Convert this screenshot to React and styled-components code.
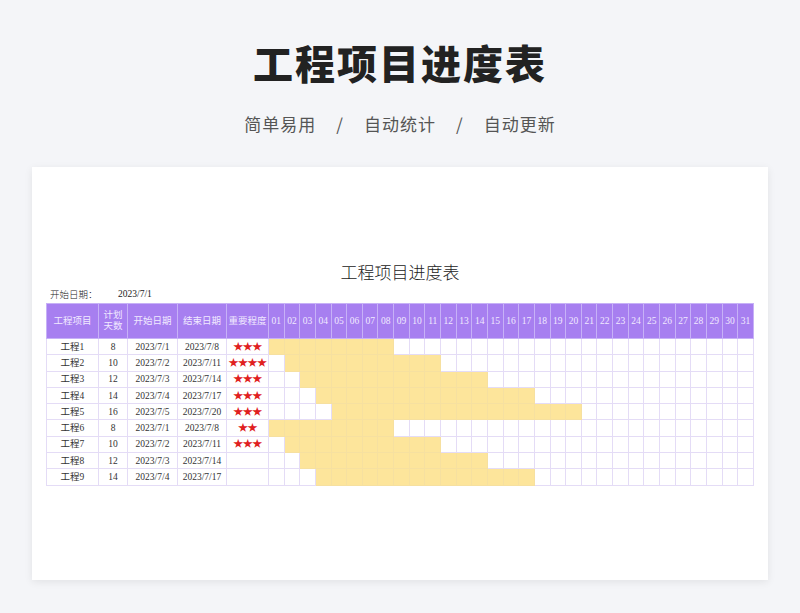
import { createGlobalStyle } from "styled-components";
import styled from "styled-components";

const Global = createGlobalStyle`
  body { margin: 0; background: #f4f5f8; font-family: "Noto Sans CJK SC", "Noto Sans", sans-serif; }
`;

const Page = styled.div`
  width: 800px;
  height: 613px;
  display: flex;
  flex-direction: column;
  align-items: center;
`;

const Heading = styled.h1`
  margin: 36px 0 0;
  height: 52px;
  font-size: 40px;
  font-weight: 900;
  color: #222;
  letter-spacing: 2px;
  line-height: 52px;
`;

const Sub = styled.div`
  margin-top: 24px;
  display: flex;
  gap: 20px;
  font-size: 17px;
  color: #555;
  line-height: 24px;
  letter-spacing: 1px;
`;

const Card = styled.div`
  margin-top: 31px;
  width: 736px;
  height: 413px;
  background: #fff;
  box-shadow: 0 2px 8px rgba(0, 0, 0, 0.08);
  box-sizing: border-box;
  padding: 93px 14px 0;
  font-family: "Liberation Serif", "Noto Sans CJK SC", serif;
`;

const Title = styled.div`
  text-align: center;
  font-size: 17px;
  color: #222;
  line-height: 24px;
  font-family: "Noto Sans CJK SC", serif;
  font-weight: 300;
`;

const StartRow = styled.div`
  display: flex;
  font-size: 9.5px;
  color: #222;
  height: 19px;
  align-items: center;
  padding-left: 4px;
  span:first-child { width: 68px; font-family: "Noto Sans CJK SC", serif; font-weight: 300; }
`;

const Table = styled.table`
  border-collapse: collapse;
  width: 708px;
  table-layout: fixed;
  font-size: 9.5px;
  color: #333;
`;

const Th = styled.th`
  background: #a77ff0;
  color: #f1eaff;
  font-weight: normal;
  border: 1px solid #c7b1f7;
  height: 34px;
  padding: 0;
  line-height: 11px;
  text-align: center;
`;

const Td = styled.td`
  border: 1px solid #e4dcf6;
  height: 15.3px;
  line-height: 12px;
  padding: 0;
  text-align: center;
  background: ${(p) => (p.$on ? "#fde59b" : "#fff")};
  border-color: ${(p) => (p.$on ? "#f6e0a0" : "#e4dcf6")};
`;

const Stars = styled.span`
  color: #e0201e;
  font-size: 10px;
  letter-spacing: -0.5px;
`;

const rows = [
  ["工程1", 8, 1, 3],
  ["工程2", 10, 2, 4],
  ["工程3", 12, 3, 3],
  ["工程4", 14, 4, 3],
  ["工程5", 16, 5, 3],
  ["工程6", 8, 1, 2],
  ["工程7", 10, 2, 3],
  ["工程8", 12, 3, 0],
  ["工程9", 14, 4, 0],
];

const days = Array.from({ length: 31 }, (_, i) => i + 1);

export default function App() {
  return (
    <Page>
      <Global />
      <Heading>工程项目进度表</Heading>
      <Sub>
        <span>简单易用</span>
        <span>/</span>
        <span>自动统计</span>
        <span>/</span>
        <span>自动更新</span>
      </Sub>
      <Card>
        <Title>工程项目进度表</Title>
        <StartRow>
          <span>开始日期：</span>
          <span>2023/7/1</span>
        </StartRow>
        <Table>
          <colgroup>
            <col style={{ width: 52 }} />
            <col style={{ width: 29 }} />
            <col style={{ width: 50 }} />
            <col style={{ width: 49 }} />
            <col style={{ width: 42 }} />
            {days.map((d) => (
              <col key={d} />
            ))}
          </colgroup>
          <thead>
            <tr>
              <Th>工程项目</Th>
              <Th>计划<br />天数</Th>
              <Th>开始日期</Th>
              <Th>结束日期</Th>
              <Th>重要程度</Th>
              {days.map((d) => (
                <Th key={d}>{String(d).padStart(2, "0")}</Th>
              ))}
            </tr>
          </thead>
          <tbody>
            {rows.map(([name, len, start, stars]) => (
              <tr key={name}>
                <Td>{name}</Td>
                <Td>{len}</Td>
                <Td>2023/7/{start}</Td>
                <Td>2023/7/{start + len - 1}</Td>
                <Td><Stars>{"★".repeat(stars)}</Stars></Td>
                {days.map((d) => (
                  <Td key={d} $on={d >= start && d < start + len} />
                ))}
              </tr>
            ))}
          </tbody>
        </Table>
      </Card>
    </Page>
  );
}
